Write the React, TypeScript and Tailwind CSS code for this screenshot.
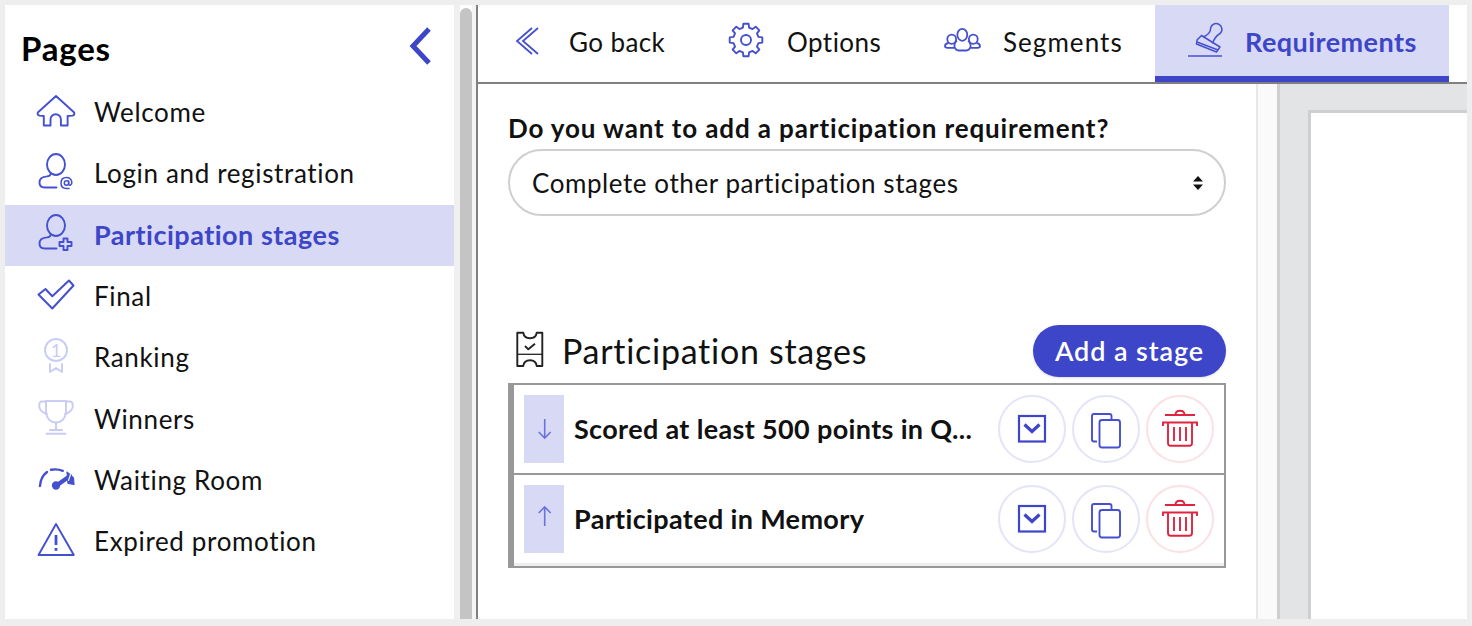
import React from "react";
import { ReactNode } from "react";

const BLUE = "#4450cf";
const LIGHT = "#c9ccf3";
const RED = "#e0243f";

function Icon44({ children, color = BLUE }: { children: ReactNode; color?: string }) {
  return (
    <svg width="44" height="44" viewBox="0 0 44 44" fill="none" stroke={color} strokeWidth="1.9" strokeLinecap="round" strokeLinejoin="round" className="shrink-0">
      {children}
    </svg>
  );
}

const HomeIcon = () => (
  <Icon44>
    <path d="M22 5 L3.8 21.5 Q3 24 5.5 24.6 L9.8 25 V34.5 H16.5 V28.4 a5.2 5.2 0 0 1 10.4 0 V34.5 H33.6 V25 L38.5 24.6 Q41 24 40.2 21.5 Z" />
  </Icon44>
);

const PersonBase = () => (
  <>
    <ellipse cx="22" cy="12.5" rx="9" ry="10.5" />
    <path d="M16.5 22 Q16.5 24 13 24.4 Q5.5 25 5.5 30.5 Q5.5 35.5 10.5 35.5 H22.5" />
  </>
);

const PersonAtIcon = () => (
  <Icon44>
    <PersonBase />
    <circle cx="32.5" cy="31" r="2.2" strokeWidth="1.5" />
    <path d="M34.7 29 V32 Q35 33.8 36.6 33 Q38.2 31.8 37.8 29.6 Q36.8 25.5 32.5 25.5 Q27 25.6 27 31 Q27 36.5 32.5 36.5 H35" strokeWidth="1.5" />
  </Icon44>
);

const PersonPlusIcon = () => (
  <Icon44>
    <PersonBase />
    <path d="M29.5 25.5 H33.5 V29 H37.5 V33 H33.5 V37 H29.5 V33 H25.5 V29 H29.5 Z" />
  </Icon44>
);

const CheckIcon = () => (
  <Icon44>
    <path d="M4.5 19.5 L11.5 14 L18.3 21.3 L35 5.5 L39.5 10.5 L18.3 33.5 Z" strokeWidth="2" />
  </Icon44>
);

const RibbonIcon = () => (
  <Icon44 color={LIGHT}>
    <circle cx="22" cy="14" r="11" />
    <text x="22" y="20.5" textAnchor="middle" fontSize="18" fill={LIGHT} stroke="none" fontFamily="Lato, sans-serif">1</text>
    <path d="M16 28 V36 L22 32 L28 36 V28" />
  </Icon44>
);

const TrophyIcon = () => (
  <Icon44 color={LIGHT}>
    <path d="M12 4 H32 V14 C32 21.5 27 25.5 22 25.5 C17 25.5 12 21.5 12 14 Z" />
    <path d="M12 4.5 H8 C5 4.5 5 8.5 5.5 10.5 C6.3 13.8 9 15.8 13 17" />
    <path d="M32 4.5 H36 C39 4.5 39 8.5 38.5 10.5 C37.7 13.8 35 15.8 31 17" />
    <path d="M22 26 V33 M16 33 H28 M12.5 36.8 H31.5" />
  </Icon44>
);

const GaugeIcon = () => (
  <Icon44>
    <path d="M6 27 Q6.5 18 13 13" strokeWidth="2.4" />
    <path d="M17 10.8 Q23 9.6 28.8 11.8" strokeWidth="2.4" />
    <path d="M22.5 26.5 L36 17" strokeWidth="4.2" />
    <circle cx="22" cy="26.5" r="3.2" fill={BLUE} />
    <path d="M33 13 L39.5 19 L40 25.5 L34 24.5 Z" fill={BLUE} strokeWidth="1.2" />
    <path d="M36.5 15.5 L34.5 21.5" stroke="#ffffff" strokeWidth="1.1" />
  </Icon44>
);

const WarningIcon = () => (
  <Icon44>
    <path d="M22 4 L4.5 35 H39.8 Z" />
    <path d="M22 15 V25" strokeWidth="2.8" strokeLinecap="butt" />
    <path d="M22 28 V30.8" strokeWidth="2.8" strokeLinecap="butt" />
  </Icon44>
);

// 8 tooth cog, same outline repeated round the centre
function gearPath(cx: number, cy: number, outer: number, inner: number) {
  const pts: string[] = [];
  for (let i = 0; i < 8; i++) {
    const a = -90 + i * 45;
    [[-14, inner], [-9, outer], [9, outer], [14, inner]].forEach(([d, r]) => {
      const t = ((a + d) * Math.PI) / 180;
      pts.push(`${(cx + r * Math.cos(t)).toFixed(2)} ${(cy + r * Math.sin(t)).toFixed(2)}`);
    });
  }
  return "M" + pts.join(" L") + " Z";
}

const pages: { label: string; icon: ReactNode; active?: boolean }[] = [
  { label: "Welcome", icon: <HomeIcon /> },
  { label: "Login and registration", icon: <PersonAtIcon /> },
  { label: "Participation stages", icon: <PersonPlusIcon />, active: true },
  { label: "Final", icon: <CheckIcon /> },
  { label: "Ranking", icon: <RibbonIcon /> },
  { label: "Winners", icon: <TrophyIcon /> },
  { label: "Waiting Room", icon: <GaugeIcon /> },
  { label: "Expired promotion", icon: <WarningIcon /> },
];

function Sidebar() {
  return (
    <div className="w-[449px] shrink-0 bg-white">
      <div className="flex h-[77px] items-start justify-between pr-[21px] pl-[16px]">
        <span className="mt-[23px] text-[33px] leading-[40px] font-bold tracking-[0.8px] text-black">Pages</span>
        <svg width="28" height="40" viewBox="0 0 28 40" fill="none" stroke="#3d46c8" strokeWidth="5" className="mt-[21px]">
          <path d="M24 3 L8 20 L24 37" />
        </svg>
      </div>
      {pages.map((p) => (
        <div key={p.label} className={`flex h-[61.33px] items-center pl-[29px] ${p.active ? "bg-[#d8d9f5]" : ""}`}>
          {p.icon}
          <span className={`ml-[16px] whitespace-nowrap ${p.active ? "text-[27px] font-bold tracking-[0.5px] text-[#3d46c8]" : "text-[26px] tracking-[0.65px] text-[#111]"}`}>
            {p.label}
          </span>
        </div>
      ))}
    </div>
  );
}

function Tab({ icon, label, className, active, textClass }: { icon: ReactNode; label: string; className: string; active?: boolean; textClass: string }) {
  return (
    <div className={`flex h-full items-center ${className} ${active ? "border-b-[6px] border-[#3d46c8] bg-[#d8d9f5]" : ""}`}>
      {icon}
      <span className={`whitespace-nowrap ${textClass}`}>{label}</span>
    </div>
  );
}

function TabBar() {
  return (
    <div className="flex h-[79px] shrink-0 border-b-2 border-[#808084]">
      <Tab
        className="w-[247px] pb-[2px] pl-[36px]"
        label="Go back"
        textClass="text-[26px] tracking-[0.4px] text-[#111]"
        icon={
          <svg width="55" height="32" viewBox="0 0 55 32" fill="none" stroke={BLUE} strokeWidth="1.8" className="-mt-[1px] shrink-0">
            <path d="M18 2 L3 15 L18 28" />
            <path d="M24 2 L9 15 L24 28" />
          </svg>
        }
      />
      <Tab
        className="w-[218px] pb-[2px]"
        label="Options"
        textClass="text-[26px] tracking-[0.45px] text-[#111]"
        icon={
          <svg width="62" height="40" viewBox="0 0 62 40" fill="none" stroke={BLUE} strokeWidth="1.9" strokeLinejoin="round" className="-mt-[5px] shrink-0">
            <path d={gearPath(21, 20, 16.5, 12.8)} />
            <circle cx="21" cy="20" r="5" />
          </svg>
        }
      />
      <Tab
        className="w-[212px] pb-[2px]"
        label="Segments"
        textClass="text-[26px] tracking-[1.05px] text-[#111]"
        icon={
          <svg width="60" height="28" viewBox="0 0 60 28" fill="none" stroke={BLUE} strokeWidth="1.8" strokeLinejoin="round" className="-mt-[4px] shrink-0">
            <ellipse cx="19.3" cy="7.8" rx="5" ry="6" />
            <ellipse cx="8.7" cy="12.2" rx="4.4" ry="4.6" />
            <ellipse cx="30.3" cy="12.2" rx="4.4" ry="4.6" />
            <path d="M5.5 16 Q2 16.8 2 19 Q2 20.8 4.5 20.8 H12 Q13 23.5 15.5 23.5 H23.5 Q26 23.5 27 20.8 H34.5 Q37 20.8 37 19 Q37 16.8 33.5 16" />
            <path d="M14 14 Q11 15.5 11.5 20.5 M25 14 Q28 15.5 27.5 20.5" />
          </svg>
        }
      />
      <Tab
        active
        className="w-[294px] pt-[4px] pl-[30px]"
        label="Requirements"
        textClass="text-[27px] font-bold tracking-[0.45px] text-[#3d46c8]"
        icon={
          <svg width="60" height="40" viewBox="0 0 60 40" fill="none" stroke={BLUE} strokeWidth="1.5" strokeLinejoin="round" className="-mt-[4px] shrink-0">
            <path d="M3 35 H37" />
            <path d="M12 19 L16.5 14.5 L35 26 L31.5 31 L11.5 23 Z" />
            <path d="M12 21 L33 29" />
            <path d="M18 16 Q25 13 25.5 8.5 A5.7 5.7 0 1 1 35 12.5 Q29.5 16 27.5 22.5" />
          </svg>
        }
      />
    </div>
  );
}

function RoundButton({ red, children }: { red?: boolean; children: ReactNode }) {
  return (
    <div className={`flex size-[68px] items-center justify-center rounded-full border-2 ${red ? "border-[#fbe0e4]" : "border-[#e3e4f8]"}`}>
      {children}
    </div>
  );
}

function StageRow({ title, dir }: { title: string; dir: "up" | "down" }) {
  return (
    <div className="flex h-[88px] items-center pr-[10px] pl-[10px]">
      <div className="flex h-[68px] w-[40px] shrink-0 items-center justify-center bg-[#d8d9f5]">
        <svg width="16" height="22" viewBox="0 0 16 22" fill="none" stroke="#6a73dc" strokeWidth="1.6" className={dir === "up" ? "-mt-[6px]" : ""}>
          {dir === "down" ? <path d="M8.7 1 V20 M2.7 14 L8.7 20 L14.7 14" /> : <path d="M8.7 21 V2 M2.7 8 L8.7 2 L14.7 8" />}
        </svg>
      </div>
      <span className="ml-[10px] flex-1 text-[27px] font-bold tracking-[0.35px] whitespace-nowrap text-[#111]">{title}</span>
      <div className="flex gap-[6px]">
        <RoundButton>
          <svg width="40" height="40" viewBox="0 0 40 40" fill="none" stroke="#3d46c8" strokeWidth="2.2">
            <rect x="7" y="7" width="26" height="25.5" />
            <path d="M12.5 15.5 L20 22.5 L27.5 15.5" strokeWidth="3.2" />
          </svg>
        </RoundButton>
        <RoundButton>
          <svg width="40" height="40" viewBox="0 0 40 40" fill="none" stroke={BLUE} strokeWidth="1.9">
            <path d="M11 32.5 H8 Q6 32.5 6 30.5 V7 Q6 5 8 5 H23.5 Q25.5 5 25.5 7 V11" />
            <rect x="13.5" y="11" width="20.5" height="27.5" rx="2.5" />
          </svg>
        </RoundButton>
        <RoundButton red>
          <svg width="40" height="40" viewBox="0 0 40 40" fill="none" stroke={RED} strokeWidth="1.9">
            <path d="M5 6 H35 M15.5 6 Q15.5 1.8 20 1.8 Q24.5 1.8 24.5 6" />
            <path d="M3 17 V13.5 H37 V17" />
            <path d="M8 13.5 V34 Q8 36.8 10.8 36.8 H29.2 Q32 36.8 32 34 V13.5" />
            <path d="M14 18 V32 M20 18 V32 M26 18 V32" />
          </svg>
        </RoundButton>
      </div>
    </div>
  );
}

function FormPanel() {
  return (
    <div className="w-[778px] shrink-0 bg-white px-[30px] pt-[27px]">
      <div className="text-[26px] leading-[34px] font-bold tracking-[0.88px] whitespace-nowrap text-[#111]">
        Do you want to add a participation requirement?
      </div>
      <div className="mt-[4px] flex h-[67px] items-center justify-between rounded-full border-2 border-[#cfcfcf] pr-[20px] pl-[22px]">
        <span className="mt-[2px] text-[26px] tracking-[0.57px] whitespace-nowrap text-[#111]">Complete other participation stages</span>
        <svg width="12" height="16" viewBox="0 0 12 16" fill="#111">
          <path d="M6 1 L11 6.5 H1 Z M1 9.5 H11 L6 15 Z" />
        </svg>
      </div>
      <div className="mt-[109px] flex h-[52px] items-center justify-between">
        <div className="flex items-center">
          <svg width="30" height="38" viewBox="0 0 30 38" fill="none" stroke="#222" strokeWidth="1.9" strokeLinejoin="round" className="-mt-[3px] ml-[7px] shrink-0">
            <path d="M2.3 1.7 H8.3 Q9 7.3 15 7.3 Q21 7.3 21.7 1.7 H27.3 V35 H21.7 Q21 29.3 15 29.3 Q9 29.3 8.3 35 H2.3 Z" />
            <path d="M2.3 23.3 H27.3" strokeWidth="1.3" />
            <path d="M10 15 L13.3 18.3 L20 12.7" />
          </svg>
          <span className="ml-[17px] -mt-[2px] text-[34px] tracking-[0.72px] whitespace-nowrap text-[#111]">Participation stages</span>
        </div>
        <div className="flex h-[52px] w-[193px] items-center justify-center rounded-full bg-[#3d46c8] text-[27px] font-semibold tracking-[0.9px] text-white shadow-sm">
          Add a stage
        </div>
      </div>
      <div className="mt-[6px] border-t-2 border-r-2 border-b-2 border-l-[6px] border-[#98989b]">
        <StageRow title="Scored at least 500 points in Q..." dir="down" />
        <div className="h-[2px] bg-[#98989b]" />
        <StageRow title="Participated in Memory" dir="up" />
        <div className="h-[3px] bg-[#eeeeee]" />
      </div>
    </div>
  );
}

export default function App() {
  return (
    <div className="h-[626px] w-[1472px] overflow-hidden bg-[#eeeeee] pt-[5px] pl-[5px] font-['Lato',sans-serif]">
      <div className="flex h-[614px] w-[1462px]">
        <Sidebar />
        <div className="flex w-[22px] shrink-0 bg-white">
          <div className="w-[6px] bg-[#f0f0f0]" />
          <div className="mt-[3px] w-[12px] rounded-t-[6px] bg-[#c4c4c4]" />
          <div className="w-[4px] bg-[#f4f4f4]" />
        </div>
        <div className="w-[2px] shrink-0 bg-[#808084]" />
        <div className="flex min-w-0 flex-1 flex-col bg-white">
          <TabBar />
          <div className="flex min-h-0 flex-1">
            <FormPanel />
            <div className="w-[21px] shrink-0 border-l-2 border-[#e8e8e8] bg-[#fafafa]" />
            <div className="flex flex-1 border-l-[3px] border-[#cfcfcf] bg-[#e3e4e6] pt-[26px] pl-[28px]">
              <div className="flex-1 border-t-[3px] border-l-[3px] border-[#cfcfcf] bg-white" />
            </div>
          </div>
        </div>
      </div>
    </div>
  );
}
